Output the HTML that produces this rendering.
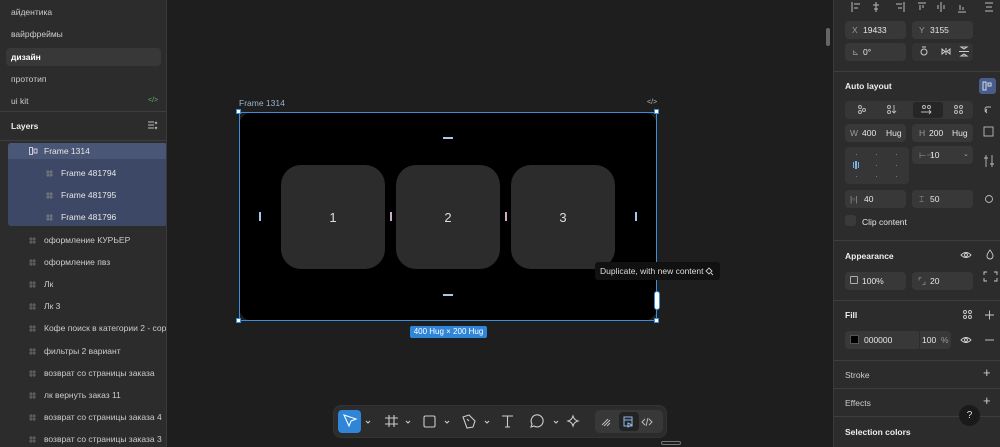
<!DOCTYPE html>
<html><head><meta charset="utf-8">
<style>
*{box-sizing:border-box;margin:0;padding:0}
body{width:1000px;height:447px;overflow:hidden;background:#1e1e1e;font-family:"Liberation Sans","Noto Sans CJK SC",sans-serif;font-size:8.5px;color:#e6e6e6;position:relative}
.a{position:absolute}
.lp{left:0;top:0;width:167px;height:447px;background:#2c2c2c;border-right:1px solid #3a3a3a;overflow:hidden}
.rp{left:833px;top:0;width:167px;height:447px;background:#2c2c2c;border-left:1px solid #3a3a3a}
.t{position:absolute;white-space:nowrap;line-height:10px}
.hr{position:absolute;height:1px;background:#3d3d3d}
.f{position:absolute;background:#383838;border-radius:4px;height:18px}
.card{position:absolute;top:165px;width:104px;height:104px;background:#2c2c2c;border-radius:20px;color:#ddd;font-size:13px;display:flex;align-items:center;justify-content:center}
.hd{position:absolute;width:5px;height:5px;background:#fff;border:1px solid #3a8fd8}
.sec{position:absolute;left:11px;font-weight:bold;font-size:8.5px;color:#eee}
</style></head><body>

<div class="a lp">
  <div class="t" style="left:11px;top:7px;color:#ccc">айдентика</div>
  <div class="t" style="left:11px;top:29px;color:#ccc">вайрфреймы</div>
  <div class="a" style="left:6px;top:48px;width:155px;height:18px;background:#383838;border-radius:4px"></div>
  <div class="t" style="left:11px;top:52px;color:#fff;font-weight:bold">дизайн</div>
  <div class="t" style="left:11px;top:74px;color:#ccc">прототип</div>
  <div class="t" style="left:11px;top:96px;color:#ccc">ui kit</div>
  <div class="t" style="left:148px;top:96px;color:#5fae6a;font-size:7px">&lt;/&gt;</div>
  <div class="hr" style="left:0;top:111px;width:167px"></div>
  <div class="t" style="left:11px;top:121px;font-weight:bold;color:#eee">Layers</div>
  <svg class="a" style="left:148px;top:121px" width="10" height="9"><path d="M0 1h6M0 4h6M0 7h6M7 1l2 2M9 1l-2 2M7 6l2 2M9 6l-2 2" stroke="#bbb" stroke-width="1" fill="none"/></svg>
  <div class="hr" style="left:0;top:140px;width:167px"></div>
  <div class="a" style="left:8px;top:143px;width:159px;height:83px;background:#3d4866;border-radius:3px"></div>
  <div class="a" style="left:8px;top:143px;width:159px;height:16px;background:#4a5675;border-radius:3px 3px 0 0"></div>
  <svg class="a" style="left:29px;top:147px" width="9" height="8"><rect x="0.5" y="0.5" width="3" height="7" fill="none" stroke="#ccd" /><rect x="5" y="2" width="3" height="4" fill="none" stroke="#ccd"/></svg>
  <div class="t" style="left:44px;top:146px">Frame 1314</div>
  <div class="t" style="left:61px;top:168px">Frame 481794</div>
  <div class="t" style="left:61px;top:190px">Frame 481795</div>
  <div class="t" style="left:61px;top:212px">Frame 481796</div>
  <div class="t" style="left:44px;top:235px;color:#ccc">оформление КУРЬЕР</div>
  <div class="t" style="left:44px;top:257px;color:#ccc">оформление пвз</div>
  <div class="t" style="left:44px;top:279px;color:#ccc">Лк</div>
  <div class="t" style="left:44px;top:301px;color:#ccc">Лк 3</div>
  <div class="t" style="left:44px;top:323px;color:#ccc">Кофе поиск в категории 2 - сорт</div>
  <div class="t" style="left:44px;top:346px;color:#ccc"> фильтры 2 вариант</div>
  <div class="t" style="left:44px;top:368px;color:#ccc">возврат со страницы заказа</div>
  <div class="t" style="left:44px;top:390px;color:#ccc">лк вернуть заказ 11</div>
  <div class="t" style="left:44px;top:412px;color:#ccc">возврат со страницы заказа 4</div>
  <div class="t" style="left:44px;top:434px;color:#ccc">возврат со страницы заказа 3</div>
  <svg class="a" style="left:0;top:0" width="167" height="447">
    <g stroke="#888" stroke-width="0.8" fill="none">
      <path d="M48 170v7M51 170v7M46 172h7M46 175h7"/>
      <path d="M48 192v7M51 192v7M46 194h7M46 197h7"/>
      <path d="M48 214v7M51 214v7M46 216h7M46 219h7"/>
      <g stroke="#777">
      <path d="M31 237v7M34 237v7M29 239h7M29 242h7"/>
      <path d="M31 259v7M34 259v7M29 261h7M29 264h7"/>
      <path d="M31 281v7M34 281v7M29 283h7M29 286h7"/>
      <path d="M31 303v7M34 303v7M29 305h7M29 308h7"/>
      <path d="M31 325v7M34 325v7M29 327h7M29 330h7"/>
      <path d="M31 348v7M34 348v7M29 350h7M29 353h7"/>
      <path d="M31 370v7M34 370v7M29 372h7M29 375h7"/>
      <path d="M31 392v7M34 392v7M29 394h7M29 397h7"/>
      <path d="M31 414v7M34 414v7M29 416h7M29 419h7"/>
      <path d="M31 436v7M34 436v7M29 438h7M29 441h7"/>
      </g>
    </g>
  </svg>
</div>

<div class="a" style="left:826px;top:28px;width:4px;height:18px;background:#666;border-radius:2px"></div>

<div class="t" style="left:239px;top:98px;color:#9bb4d0;font-size:8.5px">Frame 1314</div>
<div class="t" style="left:647px;top:98px;color:#bbb;font-size:7px">&lt;/&gt;</div>
<div class="a" style="left:239px;top:112px;width:418px;height:209px;background:#000;border-radius:14px"></div>
<div class="a" style="left:239px;top:112px;width:418px;height:209px;border:1px solid #3a8fd8"></div>
<div class="card" style="left:281px">1</div>
<div class="card" style="left:396px">2</div>
<div class="card" style="left:511px">3</div>
<div class="a" style="left:443px;top:137px;width:10px;height:2px;background:#a8c8e8"></div>
<div class="a" style="left:443px;top:294px;width:10px;height:2px;background:#a8c8e8"></div>
<div class="a" style="left:259px;top:212px;width:2px;height:9px;background:#a8c8e8"></div>
<div class="a" style="left:635px;top:212px;width:2px;height:9px;background:#a8c8e8"></div>
<div class="a" style="left:390px;top:212px;width:2px;height:9px;background:#d4a8c8"></div>
<div class="a" style="left:505px;top:212px;width:2px;height:9px;background:#d4a8c8"></div>
<div class="a" style="left:654px;top:291px;width:6px;height:19px;background:#fff;border:1px solid #3a8fd8;border-radius:3px"></div>
<div class="hd" style="left:236px;top:109px"></div>
<div class="hd" style="left:654px;top:109px"></div>
<div class="hd" style="left:236px;top:318px"></div>
<div class="hd" style="left:654px;top:318px"></div>
<div class="a" style="left:410px;top:326px;width:77px;height:12px;background:#2f86d8;border-radius:2px;color:#fff;font-size:8px;line-height:12px;text-align:center;white-space:nowrap">400 Hug × 200 Hug</div>
<div class="a" style="left:595px;top:262px;width:125px;height:18px;background:#111;border-radius:3px;color:#ddd;font-size:8.5px;line-height:18px;padding-left:5px;white-space:nowrap">Duplicate, with new content</div>
<svg class="a" style="left:705px;top:267px" width="9" height="9"><path d="M1 4l3-3 3 3-3 3zM6 6l2 2" stroke="#ccc" stroke-width="0.9" fill="none"/></svg>

<div class="a" style="left:333px;top:405px;width:334px;height:33px;background:#2c2c2c;border-radius:8px;border:1px solid #333"></div>
<div class="a" style="left:338px;top:410px;width:23px;height:23px;background:#2f86d8;border-radius:4px"></div>
<svg class="a" style="left:333px;top:405px" width="334" height="33">
  <g fill="none" stroke="#fff" stroke-width="1.1"><path d="M11 10l12 4-5 2-2 5z"/></g>
  <g fill="none" stroke="#ccc" stroke-width="1.1">
    <path d="M33 16l2 2 2-2"/>
    <path d="M56 10v12M61 10v12M52 13h13M52 19h13"/>
    <path d="M73 16l2 2 2-2"/>
    <rect x="91" y="11" width="11" height="11" rx="1.5"/>
    <path d="M112 16l2 2 2-2"/>
    <path d="M130 12l6-2 6 6-2 6-6 1zM134 14l2 2"/>
    <path d="M152 16l2 2 2-2"/>
    <path d="M169 11h11M174.5 11v11M172 22h5"/>
    <path d="M201 21l-3 1 1-3a6 6 0 1 1 2 2z"/>
    <path d="M221 16l2 2 2-2"/>
    <path d="M240 11c1 3 2 4 5 5-3 1-4 2-5 5-1-3-2-4-5-5 3-1 4-2 5-5z"/>
  </g>
</svg>
<div class="a" style="left:595px;top:410px;width:68px;height:23px;background:#383838;border-radius:5px"></div>
<div class="a" style="left:619px;top:412px;width:20px;height:19px;background:#232323;border-radius:4px"></div>
<svg class="a" style="left:595px;top:410px" width="68" height="23">
  <g fill="none" stroke="#bbb" stroke-width="1"><path d="M7 15l6-6M9 16l6-6M12 16l3-3"/>
  <path d="M50 9l-3 3 3 3M54 9l3 3-3 3M53 8l-2 8"/></g>
  <g fill="none" stroke="#8db8e8" stroke-width="1"><rect x="29" y="7" width="8" height="9"/><path d="M29 10h8M33 13l4 2-4 2z"/></g>
</svg>
<div class="a" style="left:661px;top:441px;width:20px;height:4px;border:1px solid #777;border-radius:2px"></div>

<div class="a rp">
  <svg class="a" style="left:0;top:0" width="167" height="447">
    <g fill="none" stroke="#bbb" stroke-width="1">
      <path d="M18 2v10M20 4h6M20 8h4"/>
      <path d="M42 2v10M39 5h6M40 9h4"/>
      <path d="M70 2v10M62 4h6M64 8h4"/>
      <path d="M84 3h8M86 5v5M89 5v3"/>
      <path d="M107 2v10M104 5v4M110 5v4"/>
      <path d="M124 12h8M126 5v5M129 7v3"/>
      <path d="M151 3h8M151 11h8M152 7h6"/>
    </g>
  </svg>
  <div class="f" style="left:11px;top:21px;width:61px"></div>
  <div class="t" style="left:18px;top:25px;color:#999">X</div><div class="t" style="left:29px;top:25px">19433</div>
  <div class="f" style="left:78px;top:21px;width:61px"></div>
  <div class="t" style="left:85px;top:25px;color:#999">Y</div><div class="t" style="left:96px;top:25px">3155</div>
  <div class="f" style="left:11px;top:43px;width:61px"></div>
  <div class="t" style="left:18px;top:47px;color:#999">⊾</div><div class="t" style="left:29px;top:47px">0°</div>
  <div class="f" style="left:78px;top:43px;width:61px;background:#333"></div>
  <svg class="a" style="left:0;top:0" width="167" height="70"><g fill="none" stroke="#ccc"><circle cx="90" cy="52" r="3"/><path d="M88 47h4"/><path d="M112 48v7M108 49l3 2.5-3 2.5zM116 49l-3 2.5 3 2.5z"/><path d="M125 51.5h10M127 47h6l-3 2zM127 56h6l-3-2z"/></g></svg>
  <div class="hr" style="left:0;top:71px;width:167px"></div>

  <div class="sec" style="top:81px">Auto layout</div>
  <div class="a" style="left:145px;top:78px;width:17px;height:16px;background:#4a5d8a;border-radius:3px"></div>
  <svg class="a" style="left:148px;top:81px" width="11" height="10"><rect x="1" y="1" width="3" height="8" fill="none" stroke="#cde"/><rect x="6" y="2" width="3" height="3" fill="none" stroke="#cde"/></svg>
  <div class="f" style="left:11px;top:101px;width:128px;background:#363636"></div>
  <div class="a" style="left:79px;top:102px;width:30px;height:16px;background:#262626;border-radius:3px"></div>
  <svg class="a" style="left:0;top:100px" width="167" height="140">
    <g fill="none" stroke="#bbb" stroke-width="0.9">
      <circle cx="26" cy="7" r="1.5"/><circle cx="30" cy="10" r="1.5"/><circle cx="26" cy="12" r="1.5"/>
      <circle cx="55" cy="7" r="1.5"/><circle cx="55" cy="12" r="1.5"/><path d="M60 5v8M58 11l2 2 2-2"/>
      <circle cx="90" cy="7" r="1.5"/><circle cx="95" cy="7" r="1.5"/><path d="M87 12h10M95 10l2 2-2 2"/>
      <circle cx="122" cy="7" r="1.5"/><circle cx="127" cy="7" r="1.5"/><circle cx="122" cy="12" r="1.5"/><circle cx="127" cy="12" r="1.5"/>
      <path d="M157 7h-4a2 2 0 0 0 0 4h-2M153 9l-2 2 2 2"/>
      <rect x="150" y="27" width="9" height="9"/>
      <path d="M152 61v-6M152 61v6M158 61v-6M158 61v6M150 58h4M156 64h4"/>
      <circle cx="155" cy="99" r="3.5"/>
    </g>
  </svg>
  <div class="f" style="left:11px;top:124px;width:61px"></div>
  <div class="t" style="left:16px;top:128px;color:#999">W</div><div class="t" style="left:28px;top:128px">400</div><div class="t" style="left:52px;top:128px">Hug</div>
  <div class="f" style="left:78px;top:124px;width:61px"></div>
  <div class="t" style="left:85px;top:128px;color:#999">H</div><div class="t" style="left:95px;top:128px">200</div><div class="t" style="left:118px;top:128px">Hug</div>
  <div class="a" style="left:11px;top:147px;width:64px;height:37px;background:#363636;border-radius:4px"></div>
  <svg class="a" style="left:11px;top:147px" width="64" height="37"><g fill="#777"><rect x="11" y="7" width="1" height="1"/><rect x="31" y="7" width="1" height="1"/><rect x="51" y="7" width="1" height="1"/><rect x="31" y="18" width="1" height="1"/><rect x="51" y="18" width="1" height="1"/><rect x="11" y="29" width="1" height="1"/><rect x="31" y="29" width="1" height="1"/><rect x="51" y="29" width="1" height="1"/></g><g fill="#7fb2e8"><rect x="8" y="15" width="1" height="6"/><rect x="10" y="14" width="2" height="8"/><rect x="13" y="15" width="1" height="6"/></g></svg>
  <div class="f" style="left:78px;top:146px;width:61px"></div>
  <div class="t" style="left:85px;top:150px;color:#999">⊢⊣</div><div class="t" style="left:96px;top:150px">10</div><div class="t" style="left:129px;top:150px;color:#aaa;font-size:7px">⌄</div>
  <div class="f" style="left:11px;top:190px;width:61px"></div>
  <div class="t" style="left:16px;top:194px;color:#999">|▫|</div><div class="t" style="left:30px;top:194px">40</div>
  <div class="f" style="left:78px;top:190px;width:61px"></div>
  <div class="t" style="left:85px;top:194px;color:#999">⌶</div><div class="t" style="left:96px;top:194px">50</div>
  <div class="a" style="left:11px;top:215px;width:11px;height:11px;background:#3a3a3a;border-radius:3px"></div>
  <div class="t" style="left:28px;top:217px">Clip content</div>
  <div class="hr" style="left:0;top:240px;width:167px"></div>

  <div class="sec" style="top:251px">Appearance</div>
  <svg class="a" style="left:0;top:245px" width="167" height="45"><g fill="none" stroke="#ccc" stroke-width="0.9"><path d="M127 10q5-5 10 0q-5 5-10 0z"/><circle cx="132" cy="10" r="1.5"/><path d="M156 5q-3 4-3 6a3 3 0 0 0 6 0q0-2-3-6z"/><path d="M150 30v-3h3M160 27h3v3M150 33v3h3M163 33v3h-3"/></g></svg>
  <div class="f" style="left:11px;top:272px;width:61px"></div>
  <div class="a" style="left:16px;top:276px;width:8px;height:8px;border:1px solid #aaa;border-radius:1px"></div>
  <div class="t" style="left:28px;top:276px">100%</div>
  <div class="f" style="left:78px;top:272px;width:61px"></div>
  <div class="t" style="left:84px;top:276px;color:#aaa">⌜⌟</div><div class="t" style="left:96px;top:276px">20</div>
  <div class="hr" style="left:0;top:300px;width:167px"></div>

  <div class="sec" style="top:310px">Fill</div>
  <svg class="a" style="left:0;top:305px" width="167" height="45"><g fill="none" stroke="#ccc" stroke-width="0.9"><circle cx="131" cy="7" r="1.5"/><circle cx="136" cy="7" r="1.5"/><circle cx="131" cy="12" r="1.5"/><circle cx="136" cy="12" r="1.5"/><path d="M151 10h9M155.5 5.5v9"/><path d="M127 35q5-5 10 0q-5 5-10 0z"/><circle cx="132" cy="35" r="1.5"/><path d="M151 35h9"/></g></svg>
  <div class="f" style="left:11px;top:331px;width:106px;height:18px"></div>
  <div class="a" style="left:85px;top:331px;width:1px;height:18px;background:#2c2c2c"></div>
  <div class="a" style="left:16px;top:335px;width:9px;height:9px;background:#000;border:1px solid #555"></div>
  <div class="t" style="left:30px;top:335px">000000</div>
  <div class="t" style="left:88px;top:335px">100</div><div class="t" style="left:107px;top:335px;color:#999">%</div>
  <div class="hr" style="left:0;top:360px;width:167px"></div>
  <div class="sec" style="top:370px;font-weight:normal;color:#ccc">Stroke</div>
  <div class="t" style="left:149px;top:368px;font-size:13px;color:#ccc">+</div>
  <div class="hr" style="left:0;top:388px;width:167px"></div>
  <div class="sec" style="top:398px;font-weight:normal;color:#ccc">Effects</div>
  <div class="t" style="left:149px;top:396px;font-size:13px;color:#ccc">+</div>
  <div class="hr" style="left:0;top:416px;width:167px"></div>
  <div class="sec" style="top:427px">Selection colors</div>
  <div class="a" style="left:125px;top:405px;width:21px;height:21px;border-radius:50%;background:#1a1a1a;color:#ddd;font-size:10px;line-height:21px;text-align:center">?</div>
</div>
</body></html>
